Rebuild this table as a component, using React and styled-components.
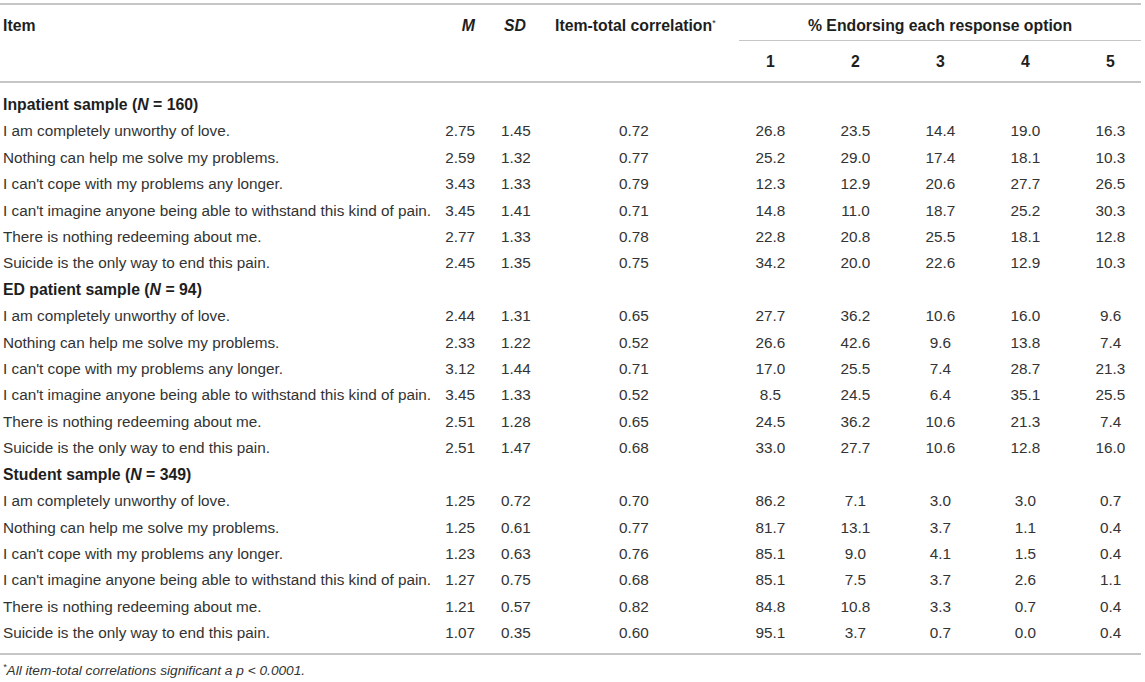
import React from "react";
import styled, { createGlobalStyle } from "styled-components";

const Global = createGlobalStyle`
  html, body { margin: 0; padding: 0; background: #fff; }
  body { font-family: "Liberation Sans", Arial, Helvetica, sans-serif; color: #333; }
`;

const LINE = "#c6c6c6";

const Page = styled.div`
  padding: 3px 4px 0 0;
  width: 1141px;
`;

const Table = styled.table`
  width: 1141px;
  table-layout: fixed;
  border-collapse: separate;
  border-spacing: 0;
  font-size: 15.3px;
`;

const HeadCell = styled.th`
  font-weight: bold;
  color: #1e1e1e;
  font-size: 15.8px;
  line-height: 17px;
  white-space: nowrap;
  vertical-align: top;
  text-align: ${(p) => p.$align || "center"};
  padding: ${(p) => (p.$sub ? "11.5px 0 11.5px 24px" : "11.5px 5px 0 3px")};
  border-top: ${(p) => (p.$top ? `2px solid ${LINE}` : "none")};
  border-bottom: ${(p) => (p.$bottom ? `2px solid ${LINE}` : "none")};
  font-style: ${(p) => (p.$italic ? "italic" : "normal")};
`;

const GroupCell = styled.th`
  font-weight: bold;
  color: #1e1e1e;
  font-size: 15.8px;
  line-height: 17px;
  white-space: nowrap;
  vertical-align: top;
  text-align: center;
  padding: 11.5px 0 7.5px 23px;
  border-top: 2px solid ${LINE};
  background: linear-gradient(${LINE}, ${LINE}) no-repeat right bottom / calc(100% - 23px) 1px;
`;

const Sup = styled.sup`
  font-size: 9px;
  font-weight: normal;
  vertical-align: 5px;
  line-height: 0;
`;

const Body = styled.tbody`
  tr:first-child td { padding-top: 9px; }
  tr:last-child td { padding-bottom: 6px; border-bottom: 2px solid ${LINE}; }
`;

const Cell = styled.td`
  height: 26.4px;
  line-height: 26.4px;
  padding: 0 ${(p) => (p.$align === "right" ? "5px" : "0")} 0 ${(p) =>
      p.$pl !== undefined ? p.$pl : 0}px;
  text-align: ${(p) => p.$align || "center"};
  white-space: nowrap;
  color: #333;
`;

const ItemCell = styled.td`
  height: 26.4px;
  line-height: 26.4px;
  padding: 0 0 0 3px;
  text-align: left;
  white-space: nowrap;
  color: #333;
`;

const SectionCell = styled.td`
  height: 26.4px;
  line-height: 26.4px;
  padding: 0 0 0 3px;
  font-weight: bold;
  font-size: 15.8px;
  color: #1e1e1e;
  white-space: nowrap;
`;

const Foot = styled.p`
  margin: 7px 0 0 3px;
  font-size: 13.7px;
  line-height: 18px;
  font-style: italic;
  color: #333;
`;

const items = [
  "I am completely unworthy of love.",
  "Nothing can help me solve my problems.",
  "I can't cope with my problems any longer.",
  "I can't imagine anyone being able to withstand this kind of pain.",
  "There is nothing redeeming about me.",
  "Suicide is the only way to end this pain.",
];

const sections = [
  {
    name: "Inpatient sample",
    n: "160",
    rows: [
      ["2.75", "1.45", "0.72", "26.8", "23.5", "14.4", "19.0", "16.3"],
      ["2.59", "1.32", "0.77", "25.2", "29.0", "17.4", "18.1", "10.3"],
      ["3.43", "1.33", "0.79", "12.3", "12.9", "20.6", "27.7", "26.5"],
      ["3.45", "1.41", "0.71", "14.8", "11.0", "18.7", "25.2", "30.3"],
      ["2.77", "1.33", "0.78", "22.8", "20.8", "25.5", "18.1", "12.8"],
      ["2.45", "1.35", "0.75", "34.2", "20.0", "22.6", "12.9", "10.3"],
    ],
  },
  {
    name: "ED patient sample",
    n: "94",
    rows: [
      ["2.44", "1.31", "0.65", "27.7", "36.2", "10.6", "16.0", "9.6"],
      ["2.33", "1.22", "0.52", "26.6", "42.6", "9.6", "13.8", "7.4"],
      ["3.12", "1.44", "0.71", "17.0", "25.5", "7.4", "28.7", "21.3"],
      ["3.45", "1.33", "0.52", "8.5", "24.5", "6.4", "35.1", "25.5"],
      ["2.51", "1.28", "0.65", "24.5", "36.2", "10.6", "21.3", "7.4"],
      ["2.51", "1.47", "0.68", "33.0", "27.7", "10.6", "12.8", "16.0"],
    ],
  },
  {
    name: "Student sample",
    n: "349",
    rows: [
      ["1.25", "0.72", "0.70", "86.2", "7.1", "3.0", "3.0", "0.7"],
      ["1.25", "0.61", "0.77", "81.7", "13.1", "3.7", "1.1", "0.4"],
      ["1.23", "0.63", "0.76", "85.1", "9.0", "4.1", "1.5", "0.4"],
      ["1.27", "0.75", "0.68", "85.1", "7.5", "3.7", "2.6", "1.1"],
      ["1.21", "0.57", "0.82", "84.8", "10.8", "3.3", "0.7", "0.4"],
      ["1.07", "0.35", "0.60", "95.1", "3.7", "0.7", "0.0", "0.4"],
    ],
  },
];

export default function App() {
  const bodyRows = [];
  sections.forEach((s) => {
    bodyRows.push(
      <tr key={s.name}>
        <SectionCell colSpan={9}>
          {s.name} (<i>N</i> = {s.n})
        </SectionCell>
      </tr>
    );
    s.rows.forEach((r, i) => {
      bodyRows.push(
        <tr key={s.name + i}>
          <ItemCell>{items[i]}</ItemCell>
          <Cell $align="right">{r[0]}</Cell>
          <Cell>{r[1]}</Cell>
          <Cell>{r[2]}</Cell>
          {r.slice(3).map((v, j) => (
            <Cell key={j} $pl={24}>
              {v}
            </Cell>
          ))}
        </tr>
      );
    });
  });

  return (
    <Page>
      <Global />
      <Table>
        <colgroup>
          <col style={{ width: 438 }} />
          <col style={{ width: 42 }} />
          <col style={{ width: 72 }} />
          <col style={{ width: 164 }} />
          <col style={{ width: 85 }} />
          <col style={{ width: 85 }} />
          <col style={{ width: 85 }} />
          <col style={{ width: 85 }} />
          <col style={{ width: 85 }} />
        </colgroup>
        <thead>
          <tr>
            <HeadCell rowSpan={2} $align="left" $top $bottom>
              Item
            </HeadCell>
            <HeadCell rowSpan={2} $align="right" $top $bottom $italic>
              M
            </HeadCell>
            <HeadCell rowSpan={2} $top $bottom $italic>
              SD
            </HeadCell>
            <HeadCell rowSpan={2} $top $bottom>
              Item-total correlation<Sup>*</Sup>
            </HeadCell>
            <GroupCell colSpan={5}>% Endorsing each response option</GroupCell>
          </tr>
          <tr>
            {["1", "2", "3", "4", "5"].map((h) => (
              <HeadCell key={h} $sub $bottom>
                {h}
              </HeadCell>
            ))}
          </tr>
        </thead>
        <Body>{bodyRows}</Body>
      </Table>
      <Foot>
        <Sup>*</Sup>All item-total correlations significant a p &lt; 0.0001.
      </Foot>
    </Page>
  );
}
